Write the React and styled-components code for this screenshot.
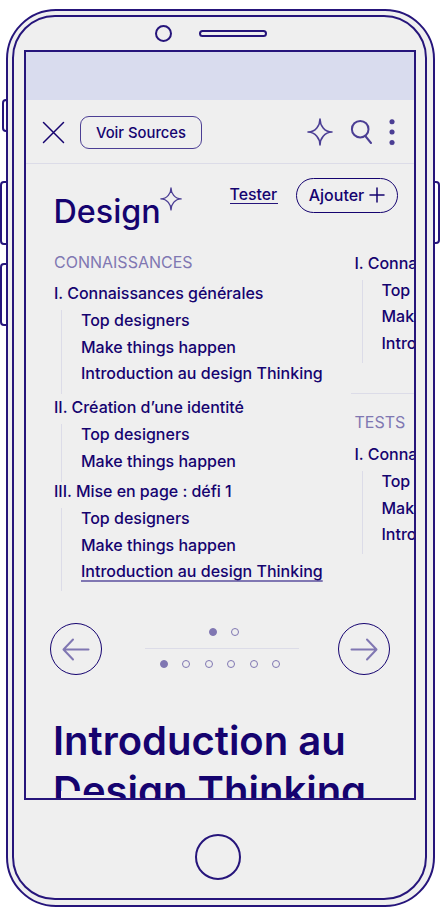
import React from 'react';
import styled, { createGlobalStyle, css } from 'styled-components';

const ink = '#15036f';
const frame = '#26157b';
const mid = '#4b3e94';
const soft = '#8077b2';
const paper = '#efefef';
const rule = '#dcdce8';

const Global = createGlobalStyle`
  * { box-sizing: border-box; }
  body { margin: 0; background: #fff; font-family: Inter, sans-serif; color: ${ink}; }
`;

const Stage = styled.main`
  position: relative;
  width: 441px;
  height: 908px;
  padding: 9px 6px 0;
  overflow: hidden;
`;

const SideButton = styled.i`
  position: absolute;
  top: ${p => p.$top}px;
  left: ${p => p.$left}px;
  width: ${p => p.$width}px;
  height: ${p => p.$height}px;
  border: 2px solid ${frame};
  border-radius: ${p => (p.$right ? '0 4px 4px 0' : '4px 0 0 4px')};
`;

const Shell = styled.div`
  position: relative;
  width: 429px;
  height: 898px;
  padding: 4px 6px 0 4px;
  border: 2px solid ${frame};
  border-radius: 50px;
  background: ${paper};
`;

const Bezel = styled.div`
  display: flex;
  flex-direction: column;
  align-items: center;
  width: 415px;
  height: 885px;
  border: 2px solid ${frame};
  border-radius: 43px;
`;

const Sensors = styled.header`
  display: flex;
  align-items: center;
  gap: 27px;
  height: 33px;
  width: 100%;
  padding: 0 0 0 141px;
`;

const Camera = styled.i`
  width: 17px;
  height: 17px;
  border: 2px solid ${frame};
  border-radius: 50%;
`;

const Speaker = styled.i`
  width: 68px;
  height: 7px;
  border: 2px solid ${frame};
  border-radius: 4px;
`;

const Screen = styled.section`
  width: 392px;
  height: 750px;
  border: 2px solid ${frame};
  overflow: hidden;
  flex: none;
`;

const StatusBar = styled.div`
  height: 48px;
  background: #d9dcee;
`;

const Toolbar = styled.nav`
  display: flex;
  align-items: center;
  height: 64px;
  padding: 2px 16px 0;
  border-bottom: 1px solid ${rule};
`;

const Tools = styled.div`
  display: flex;
  align-items: center;
  gap: 17.4px;
`;

const Pill = styled.button`
  display: flex;
  align-items: center;
  justify-content: center;
  gap: 5px;
  padding: 0 0 0 1px;
  background: none;
  color: ${ink};
  font: 500 ${p => p.$size}px Inter, sans-serif;
  width: ${p => p.$w}px;
  height: ${p => p.$h}px;
  border: 1px solid ${p => p.$line};
  border-radius: ${p => p.$r}px;
`;

const SourcesPill = styled(Pill)`
  margin: 0 105px 0 15px;
`;

const AddPill = styled(Pill)`
  padding: 0 0 1px 1px;
`;

const Icon = styled.svg`
  display: block;
  flex: none;
  fill: none;
  stroke: ${p => p.$color || mid};
  stroke-width: ${p => p.$stroke || 1.5};
  stroke-linecap: round;
  stroke-linejoin: round;
`;

const TitleRow = styled.div`
  display: flex;
  height: 84px;
  padding: 14px 0 0 28px;
`;

const Title = styled.h1`
  margin: 13px 0 0;
  width: 106px;
  font-size: 32.3px;
  line-height: 41px;
  font-weight: 500;
`;

const TitleStar = styled.div`
  padding-top: 9px;
  width: 70px;
`;

const TestLink = styled.a`
  width: 48px;
  height: 20px;
  margin: 6px 18px 0 0;
  border-bottom: 1px solid ${frame};
  font-size: 15.9px;
  line-height: 22px;
  font-weight: 500;
`;

const Columns = styled.div`
  display: flex;
  height: 350px;
  width: 520px;
`;

const Column = styled.div`
  flex: none;
  width: ${p => p.$w}px;
  padding: ${p => p.$top || 0}px 0 0 28.5px;
`;

const Caption = styled.h2`
  margin: 0;
  height: 35px;
  padding-top: 4px;
  color: ${soft};
  font-size: 16px;
  line-height: 20px;
  font-weight: 400;
`;

const Group = styled.div`
  height: ${p => p.$h}px;
`;

const GroupTitle = styled.h3`
  margin: 0 0 7px;
  font-size: 16px;
  line-height: 20px;
  letter-spacing: -0.03px;
  font-weight: 500;
  white-space: nowrap;
`;

const Lessons = styled.ul`
  list-style: none;
  margin: 0 0 0 7px;
  padding: 0 0 0 19px;
  height: ${p => p.$h}px;
  border-left: 1px solid ${rule};
`;

const Lesson = styled.li`
  height: 26.5px;
  font-size: 16px;
  line-height: 20px;
  font-weight: 500;
  white-space: nowrap;
  ${p => p.$current && css`
    text-decoration: underline ${soft} 2px;
    text-underline-offset: 3px;
  `}
`;

const Divider = styled.hr`
  margin: 0 0 14px -4px;
  border: 0;
  border-top: 1px solid ${rule};
`;

const TestsCaption = styled(Caption)`
  height: 36px;
`;

const Pager = styled.div`
  display: flex;
  align-items: flex-start;
  justify-content: space-between;
  height: 53px;
  margin-top: 25px;
  padding: 0 24px;
`;

const RoundButton = styled.button`
  display: flex;
  align-items: center;
  justify-content: center;
  width: 52px;
  height: 52px;
  padding: 0;
  border: 1px solid ${ink};
  border-radius: 50%;
  background: none;
`;

const Dots = styled.div`
  display: flex;
  flex-direction: column;
  align-items: center;
  width: 154px;
  margin: 5px 0 0 4px;
`;

const DotRow = styled.div`
  display: flex;
  justify-content: center;
  gap: ${p => p.$gap}px;
  height: 8px;
  padding: 0 ${p => p.$right || 0}px 0 ${p => p.$shift || 0}px;
`;

const Dot = styled.i`
  width: 8px;
  height: 8px;
  border: 1.4px solid ${soft};
  border-radius: 50%;
  background: ${p => (p.$on ? soft : 'transparent')};
`;

const DotRule = styled.hr`
  width: 154px;
  margin: 12px 0 11px;
  border: 0;
  border-top: 1px solid ${rule};
`;

const Heading = styled.h2`
  position: relative;
  margin: 40px 0 0 27.5px;
  font-size: 40px;
  line-height: 50px;
  font-weight: 600;
  white-space: nowrap;
`;

const Cover = styled.i`
  position: absolute;
  left: ${p => p.$x}px;
  top: ${p => p.$y}px;
  width: 22px;
  height: 16px;
  background: ${paper};
`;

const Home = styled.i`
  width: 46px;
  height: 46px;
  margin: 34px 3px 0 0;
  border: 2px solid ${frame};
  border-radius: 50%;
`;

const Star = ({ size }) => (
  <Icon width={size} height={size * 1.08} viewBox="0 0 26 28" $stroke={1.6}>
    <path d="M13 1C13 7.5 17.5 13.8 25 14C17.5 14.2 13 20.5 13 27C13 20.5 8.5 14.2 1 14C8.5 13.8 13 7.5 13 1Z" />
  </Icon>
);

const Section = ({ title, items, h, line, current }) => (
  <Group $h={h}>
    <GroupTitle>{title}</GroupTitle>
    <Lessons $h={line}>
      {items.map((t, i) => <Lesson key={t} $current={current === i}>{t}</Lesson>)}
    </Lessons>
  </Group>
);

const lessons = ['Top designers', 'Make things happen', 'Introduction au design Thinking'];

export default function App() {
  return (
    <Stage>
      <Global />
      <SideButton $left={2} $top={99} $width={6} $height={33} />
      <SideButton $left={0} $top={181} $width={8} $height={64} />
      <SideButton $left={0} $top={263} $width={8} $height={63} />
      <SideButton $right $left={433} $top={181} $width={7} $height={63} />
      <Shell>
        <Bezel>
          <Sensors><Camera /><Speaker /></Sensors>
          <Screen>
            <StatusBar />
            <Toolbar>
              <Icon width="23" height="23" viewBox="0 0 23 23" $color={ink}>
                <path d="M1.5 1.5L21.5 21.5M21.5 1.5L1.5 21.5" />
              </Icon>
              <SourcesPill $w={122} $h={33} $r={9} $size={14.8} $line={mid}>Voir Sources</SourcesPill>
              <Tools>
                <Star size={26} />
                <Icon width="22" height="26" viewBox="0 0 22 26" $stroke={2}>
                  <circle cx="10.2" cy="10.2" r="8.3" />
                  <path d="M15.3 17L21 24" />
                </Icon>
                <Icon width="6" height="28" viewBox="0 0 6 28" $stroke={0.1}>
                  <g fill={mid}><circle cx="3" cy="3.8" r="2.5" /><circle cx="3" cy="14" r="2.5" /><circle cx="3" cy="24.6" r="2.5" /></g>
                </Icon>
              </Tools>
            </Toolbar>
            <TitleRow>
              <Title>Design</Title>
              <TitleStar><Star size={22} /></TitleStar>
              <TestLink>Tester</TestLink>
              <AddPill $w={102} $h={35} $r={18} $size={16} $line={ink}>
                Ajouter
                <Icon width="16" height="16" viewBox="0 0 16 16" $color={ink}><path d="M8 1V15M1 8H15" /></Icon>
              </AddPill>
            </TitleRow>
            <Columns>
              <Column $w={300.5}>
                <Caption>CONNAISSANCES</Caption>
                <Section title="I. Connaissances générales" items={lessons} h={114} line={84} />
                <Section title="II. Création d’une identité" items={lessons.slice(0, 2)} h={84} line={58} />
                <Section title="III. Mise en page : défi 1" items={lessons} h={114} line={83} current={2} />
              </Column>
              <Column $w={220} $top={4.5}>
                <Section title="I. Connaissances générales" items={lessons} h={140.5} line={83} />
                <Divider />
                <TestsCaption>TESTS</TestsCaption>
                <Section title="I. Connaissances générales" items={lessons} h={114} line={83} />
              </Column>
            </Columns>
            <Pager>
              <RoundButton aria-label="Précédent">
                <Icon width="28" height="23" viewBox="0 0 28 23" $color={soft} $stroke={2}><path d="M26.5 11.5H2M11 1.5L1.5 11.5L11 21.5" /></Icon>
              </RoundButton>
              <Dots>
                <DotRow $gap={14} $shift={4}><Dot $on /><Dot /></DotRow>
                <DotRule />
                <DotRow $gap={14.5} $right={3}><Dot $on /><Dot /><Dot /><Dot /><Dot /><Dot /></DotRow>
              </Dots>
              <RoundButton aria-label="Suivant">
                <Icon width="28" height="23" viewBox="0 0 28 23" $color={soft} $stroke={2}><path d="M1.5 11.5H26M17 1.5L26.5 11.5L17 21.5" /></Icon>
              </RoundButton>
            </Pager>
            <Heading>
              Introduction au<br />Design Thinking
              <Cover $x={7.5} $y={75} />
              <Cover $x={29.5} $y={79} />
            </Heading>
          </Screen>
          <Home />
        </Bezel>
      </Shell>
    </Stage>
  );
}
